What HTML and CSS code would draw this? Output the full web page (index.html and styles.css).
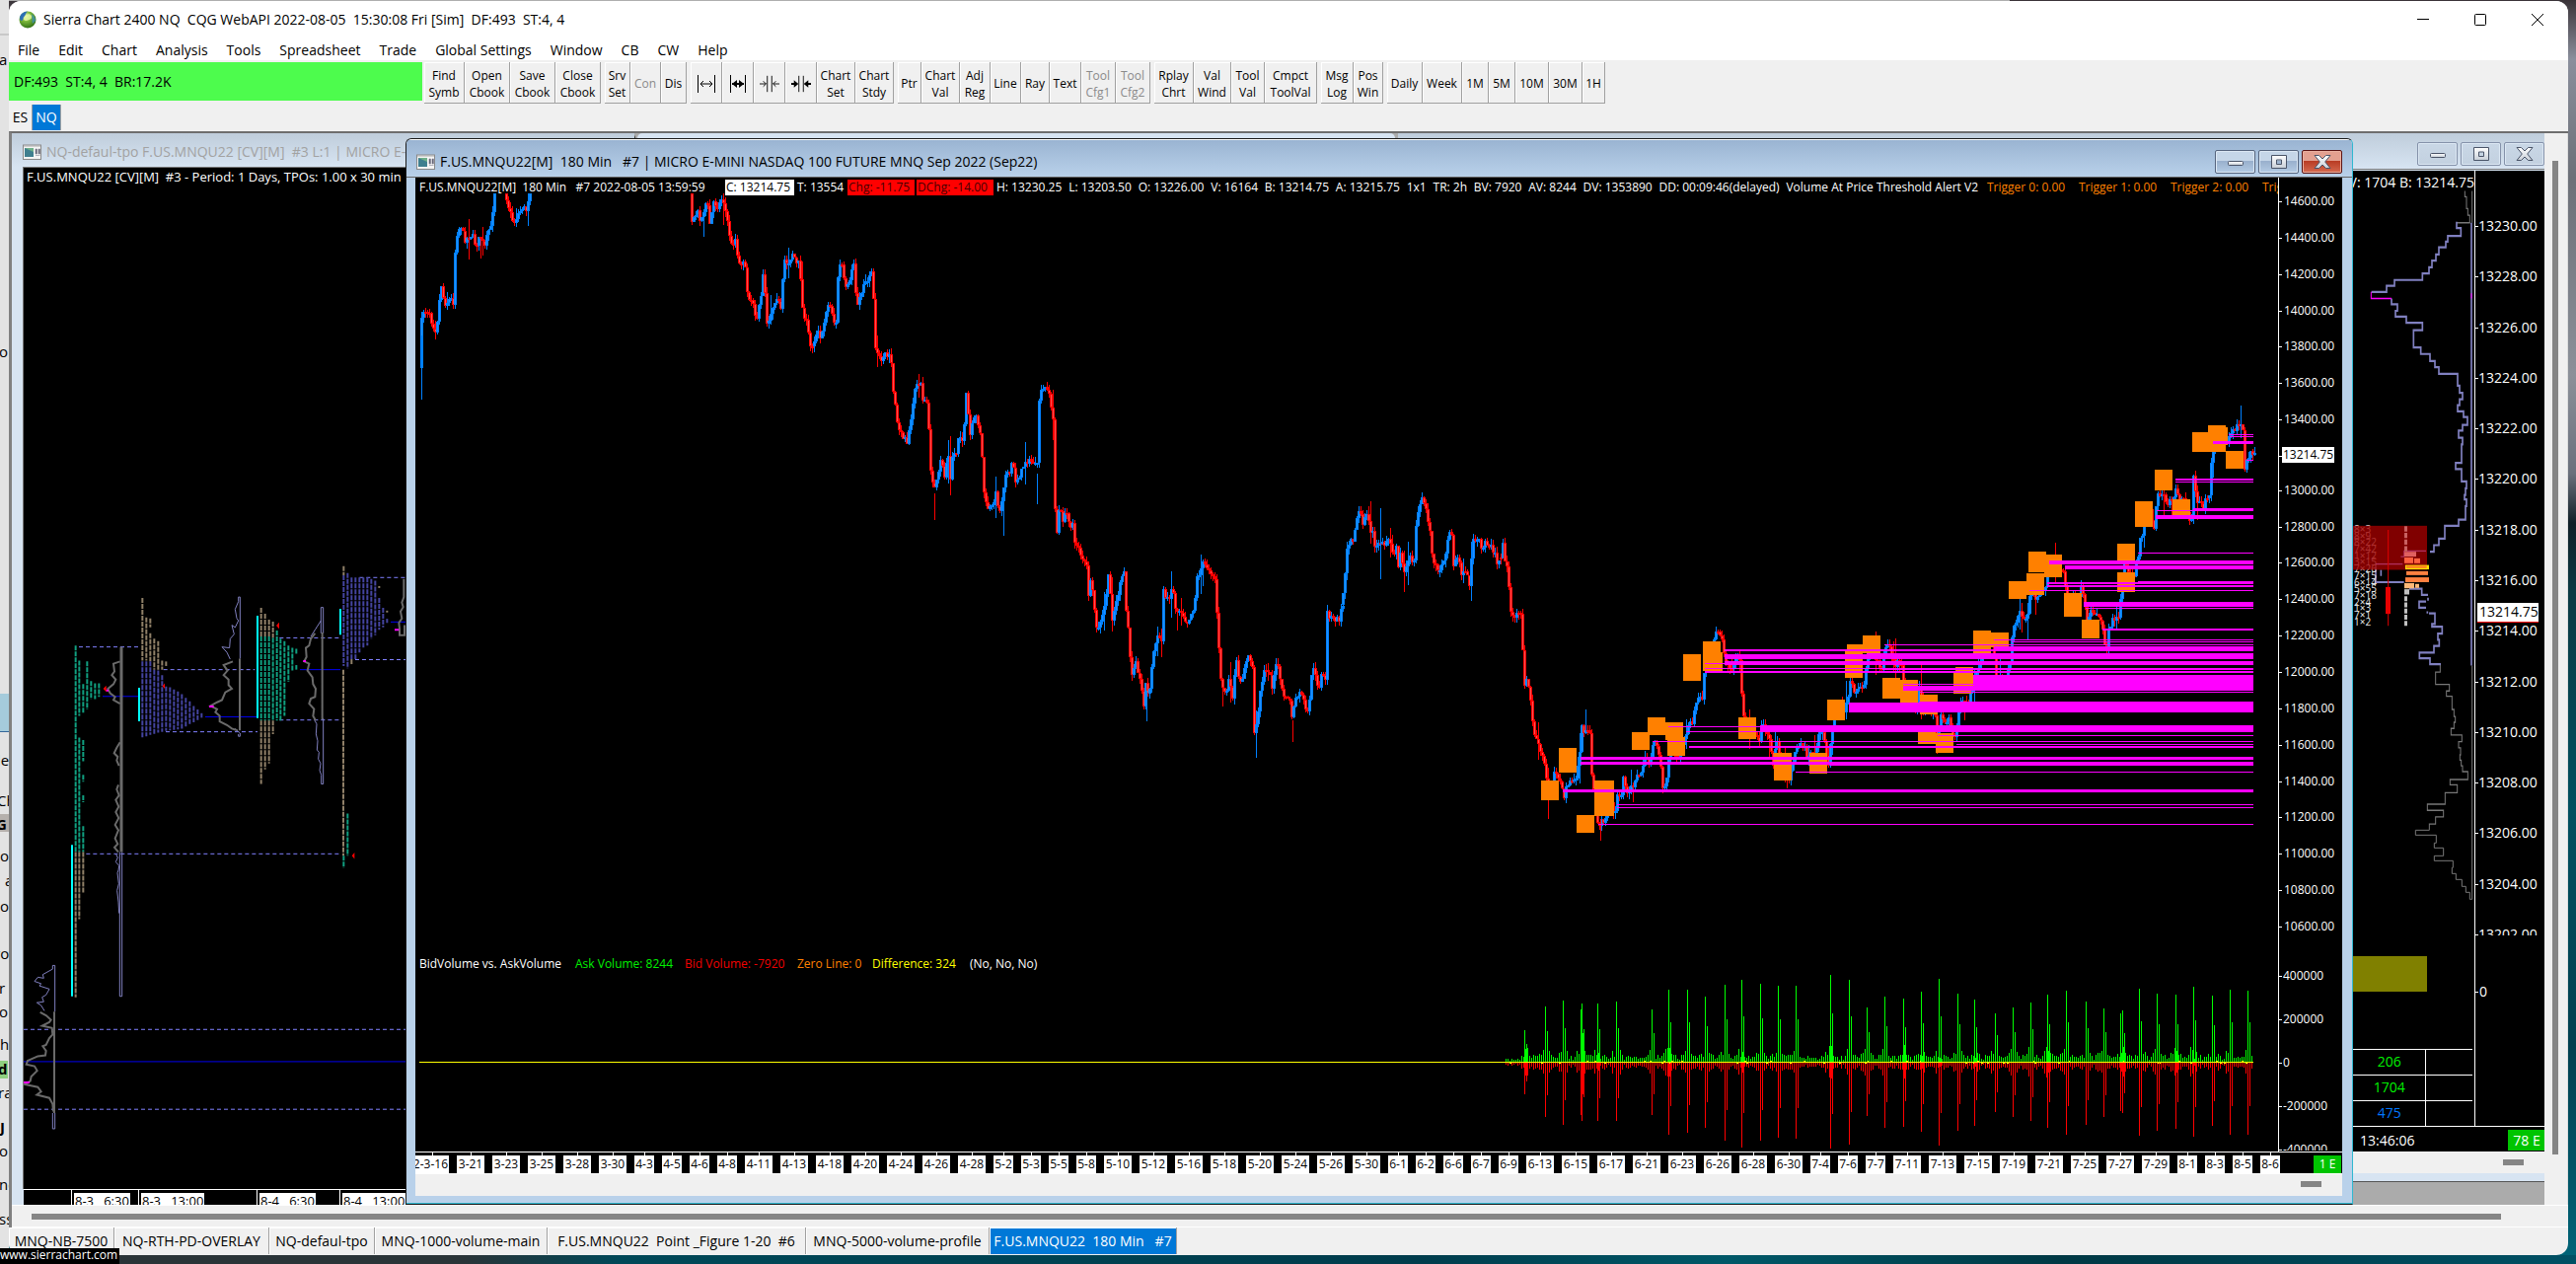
FILE: index.html
```html
<!DOCTYPE html>
<html lang="en">
<head>
<meta charset="utf-8">
<title>Sierra Chart 2400 NQ</title>
<link rel="stylesheet" href="styles.css">
</head>
<body>
<svg width="0" height="0" class="defs" aria-hidden="true">
  <defs>
    <linearGradient id="gl" x1="0" y1="0" x2="0" y2="1"><stop offset="0" stop-color="#fff"/><stop offset="1" stop-color="#c8cfd8"/></linearGradient>
    <radialGradient id="globe" cx=".4" cy=".3" r=".75"><stop offset="0" stop-color="#e8f8c0"/><stop offset=".4" stop-color="#7cb83a"/><stop offset="1" stop-color="#2a6a10"/></radialGradient>
    <symbol id="i-min" viewBox="0 0 20 16"><rect x="2.500" y="7.500" width="15" height="4" rx="1" fill="url(#gl)" stroke="#4a5468"/></symbol>
    <symbol id="i-max" viewBox="0 0 20 16"><path d="M2.500 1.500h15v13h-15zM7.500 6v4.500h5V6z" fill="url(#gl)" fill-rule="evenodd" stroke="#4a5468"/></symbol>
    <symbol id="i-close" viewBox="0 0 20 16"><path d="M2 1.500h4.500L10 5l3.500-3.500H18L12.700 8l5.300 6.500h-4.500L10 11l-3.500 3.500H2L7.300 8z" fill="url(#gl)" stroke="#4a5468"/></symbol>
    <symbol id="i-doc" viewBox="0 0 19 16"><rect x=".5" y="1" width="18" height="14.500" fill="#f4f4f4" stroke="#8a8a8a"/><rect x="2" y="4" width="9" height="9" fill="#3f7f8f"/><path d="M2 4h9v4z" fill="#6fb08a"/><path d="M13 5h1.500v5H13zM16 5h1.500v5H16zM13 11.500h4.500" fill="#556" stroke="#889" stroke-width=".6"/><path d="M1 2h17" stroke="#aaa"/></symbol>
  </defs>
</svg>

<div class="desktop">
  <svg class="behind" viewBox="0 0 9 1281" preserveAspectRatio="xMinYMin slice" aria-hidden="true">
    <rect width="9" height="1281" fill="#e3e3e3"/>
    <rect y="34" width="9" height="2" fill="#c8c8c8"/>
    <rect y="703" width="9" height="38" fill="#a5cbdb"/>
    <rect y="741" width="9" height="1" fill="#336699"/>
    <rect y="825" width="9" height="18" fill="#b5b0ac"/>
    <rect y="1075" width="8" height="18" fill="#8fd080"/>
    <text x="-1" y="66">a</text><text x="-1" y="362">o</text><text x="-3" y="776">le</text>
    <text x="-3" y="817">Ch</text><text x="-4" y="841" class="bold">G</text><text x="0" y="873">or</text>
    <text x="5" y="898">a</text><text x="0" y="924">oc</text><text x="-6" y="972">ro</text>
    <text x="-1" y="1007">r</text><text x="-1" y="1031">o</text><text x="0" y="1064">h</text>
    <text x="-2" y="1089" class="bold">d</text><text x="-2" y="1113">ra</text><text x="0" y="1148" class="bold">J</text>
    <text x="-1" y="1172">o</text><text x="-1" y="1206">ne</text><text x="-1" y="1241">ss</text>
  </svg>

  <main class="app">
    <header class="titlebar">
      <svg class="logo" viewBox="0 0 18 18"><circle cx="9" cy="9" r="8.500" fill="url(#globe)"/><path d="M1 8C1 3 5 1 9 .6 6 3 7 6 4 9c-1 2-2 1-3-1z" fill="#2c6fb5"/><path d="M5 6c3-3 6-4 8-1 1 3-2 4-5 5-3 0-4-2-3-4z" fill="#e6f7a0" opacity=".8"/><path d="M13 3c3 2 4 5 4 7l-3 3c-1-3 0-6-1-10z" fill="#3a8fc0" opacity=".7"/></svg>
      <h1>Sierra Chart 2400 NQ&nbsp; CQG WebAPI 2022-08-05&nbsp; 15:30:08 Fri [Sim]&nbsp; DF:493&nbsp; ST:4, 4</h1>
      <div class="sys">
        <button aria-label="Minimize"><svg viewBox="0 0 14 14"><path d="M1 6.500h12" /></svg></button>
        <button aria-label="Maximize"><svg viewBox="0 0 14 14"><rect x="1.500" y="1.500" width="11" height="11" rx="1"/></svg></button>
        <button aria-label="Close"><svg viewBox="0 0 14 14"><path d="M1 1l12 12M13 1L1 13"/></svg></button>
      </div>
    </header>
    <nav class="menu">
      <a href="#">File</a><a href="#">Edit</a><a href="#">Chart</a><a href="#">Analysis</a><a href="#">Tools</a><a href="#">Spreadsheet</a><a href="#">Trade</a><a href="#">Global Settings</a><a href="#">Window</a><a href="#">CB</a><a href="#">CW</a><a href="#">Help</a>
    </nav>
    <div class="toolbar">
      <div class="status">DF:493&nbsp; ST:4, 4&nbsp; BR:17.2K</div>
      <div class="group g-file"><button>Find<br>Symb</button><button>Open<br>Cbook</button><button>Save<br>Cbook</button><button>Close<br>Cbook</button></div>
      <div class="group g-conn"><button>Srv<br>Set</button><button disabled>Con</button><button>Dis</button></div>
      <div class="group g-bars">
        <button aria-label="Increase bar spacing"><svg viewBox="0 0 20 20"><path d="M1.500 1v18M18.500 1v18M4 10h12M7 7l-3 3 3 3M13 7l3 3-3 3"/></svg></button>
        <button aria-label="Increase bar width"><svg viewBox="0 0 20 20"><path d="M2.500 1v18M17.500 1v18"/><path d="M4 10h12" stroke-width="2"/><path d="M9 6v8l-5-4zM11 6v8l5-4z" fill="#000" stroke="none"/></svg></button>
        <button aria-label="Decrease bar spacing"><svg viewBox="0 0 22 20"><path d="M8.500 1v18M13.500 1v18M0 10h7M4 7l3 3-3 3M22 10h-7M18 7l-3 3 3 3"/></svg></button>
        <button aria-label="Decrease bar width"><svg viewBox="0 0 22 20"><path d="M8.500 1v18M13.500 1v18"/><path d="M0 10h4M18 10h4" stroke-width="2"/><path d="M3 6v8l5-4zM19 6v8l-5-4z" fill="#000" stroke="none"/></svg></button>
        <button>Chart<br>Set</button><button>Chart<br>Stdy</button>
      </div>
      <div class="group g-tools"><button>Ptr</button><button>Chart<br>Val</button><button>Adj<br>Reg</button><button>Line</button><button>Ray</button><button>Text</button><button disabled>Tool<br>Cfg1</button><button disabled>Tool<br>Cfg2</button></div>
      <div class="group g-wind"><button>Rplay<br>Chrt</button><button>Val<br>Wind</button><button>Tool<br>Val</button><button>Cmpct<br>ToolVal</button></div>
      <div class="group g-log"><button>Msg<br>Log</button><button>Pos<br>Win</button></div>
      <div class="group g-period"><button>Daily</button><button>Week</button><button>1M</button><button>5M</button><button>10M</button><button>30M</button><button>1H</button></div>
    </div>
    <nav class="books"><button>ES</button><button class="active">NQ</button></nav>

    <div class="mdi">
      <div class="canvas">
        <section class="win win-mid"></section>

        <section class="win win-left">
          <header class="caption"><svg class="doc"><use href="#i-doc"/></svg><h2>NQ-defaul-tpo F.US.MNQU22 [CV][M]&nbsp; #3 L:1 | MICRO E-MINI NASDAQ 100</h2></header>
          <div class="tpo">
            <svg id="tpo" viewBox="24 170 619 1035" preserveAspectRatio="none">
              <svg x="0" y="560" width="430" height="721" viewBox="0 0 1290 1568" preserveAspectRatio="none" class="profiles">
                <g class="dash"><path d="M240 208H423M262 664H1030M497 258H775M504 395H783M850 188H1035M850 369H1035M1093 55H1290M1080 236H1290M72 1227H1290"/><path d="M72 1051H1290"/></g>
                <g class="blue"><path d="M312 317H423M624 362H783M912 258H1035M1188 153H1290M72 1122H1290"/></g>
                <g class="cyan"><path d="M219 644V978M423 298V372M783 139V365M1035 124V181"/></g>
                <g id="tpo-columns"></g>
                <g class="lav"><path d="M167 1012V910H160V918L130 930 133 938 115 936 105 945 125 950 120 955 150 962 140 975 128 980 133 990 112 992 125 998 135 1010M160 1235V1270H167V1235"/><path d="M352 664 358 672 352 682 362 690 360 700 357 706 361 730 356 745 360 770 362 795M364 660V978H371V660"/><path d="M730 234V98H725V108L715 125 720 145 725 150 715 165 705 160 712 180 700 190 698 210 675 208 690 220 700 235M715 388 730 398V405H725V400"/><path d="M976 178V121H983V178M976 150 960 168 945 185M957 370 963 378 961 400 966 415 964 435 970 440 968 455 975 465 972 480 977 490V510H983V365"/></g>
                <g class="gray"><path d="M165 1012V1235M122 1013 140 1020 155 1030 150 1035 128 1043 158 1048 160 1062 150 1070 140 1085 130 1088 140 1098 138 1108 115 1110 84 1120 80 1128 105 1132 113 1142 95 1155 92 1165 76 1172 115 1178 125 1188 112 1195 150 1202 160 1215 162 1232"/><path d="M369 208V660" class="thick"/><path d="M365 240 345 245 348 262 340 270 352 280 345 290 328 300 335 310 350 318 345 325 365 333M365 418 355 430 347 442 358 450 355 458 362 470M360 512 355 522 362 535 352 545 361 560 352 572 361 585 350 600 360 612 350 630 358 642 348 650 360 660"/><path d="M729 234V392M708 240 680 248 692 260 680 270 695 280 695 292 705 300 685 308 675 325 660 330 640 338 660 345 655 352 668 360 668 372 690 380 705 388 722 392"/><path d="M980 176V368M958 178 945 190 940 205 930 210 932 230 925 240 940 245 935 260 950 275 952 290 960 300 958 318 945 322 940 333 955 345 952 360 960 370"/><path d="M1228 58V98L1222 110 1226 120 1218 130 1222 145 1213 155 1215 168 1215 182H1230V160"/></g>
                <g class="mag"><path d="M322 304H330M636 339H650M922 239H930M1200 170H1213M72 1168H90"/></g>
                <g class="redmark"><path d="M314 300l9-7v14zM494 294l7-6v12zM840 161l9-7v14zM1070 668l8-7v14z"/></g>
              </svg>
            </svg>
            <p class="readout">F.US.MNQU22 [CV][M]&nbsp; #3 - Period: 1 Days, TPOs: 1.00 x 30 min</p>
          </div>
          <ol class="sessions"><li><b>8-3&nbsp; &nbsp;6:30</b></li><li><b>8-3&nbsp; &nbsp;13:00</b></li><li><b>8-4&nbsp; &nbsp;6:30</b></li><li><b>8-4&nbsp; &nbsp;13:00</b></li></ol>
        </section>

        <section class="win win-right">
          <header class="caption"><h2></h2>
            <div class="ctl"><button aria-label="Minimize chart"><svg><use href="#i-min"/></svg></button><button aria-label="Maximize chart"><svg><use href="#i-max"/></svg></button><button aria-label="Close chart"><svg><use href="#i-close"/></svg></button></div>
          </header>
          <div class="client">
            <div class="plot">
              <svg viewBox="1425 173 1083 968" preserveAspectRatio="none">
                <svg x="2280" y="140" width="331" height="700" viewBox="0 0 993 1568" preserveAspectRatio="none" class="vol">
                  <path class="g1" d="M655 120V133H660V160H664V175H670V192H630M677 120V192M677 1197V1568M580 1194V1212H566V1240H608V1255H599V1267H616V1297H622V1313H626V1326H622V1340H613V1355H646V1370H636V1384H642V1400H640V1412H644V1425H648V1438H664V1456H610V1468H632V1486H595V1512H541V1526H590V1541H566V1557H547V1568"/>
                  <path class="p2" d="M675 192V1197M630 190V204H643V222H603V235H597V248H576V264H567V278H555V293H546V307H526V322H441V335H417V349H371M432 364V377H450V392H444V405H477V419H526V436H499V475H521V490H549V506H564V520H576V535H633V562H639V578H648V593H639V606H633V620H651V633H663V651H648V664H636V680H648V695H645V737H627V751H645V779H660V795H657V810H654V820H660V835H657V866H636V880H594V909H576V924H561V939H549"/>
                  <path class="p1" d="M384 967V1008H470M400 980V994M486 1023H524V1037H543M543 1043V1050M537 1066H516V1052H537M541 1074V1079M546 1079H564V1103H555V1109H586V1125H573V1139H577V1153H561V1168H517V1181H549V1194H582"/>
                  <path class="m1" d="M432 364H370V349M675 352V364"/>
                  <g id="prints"></g>
                  <rect x="315" y="880" width="225" height="100" fill="#a00000" opacity=".8"/>
                  <path d="M384 967H466M460 950H470V937H537" stroke="#b03060" fill="none" stroke-width="3"/>
                  <path d="M422 889V1107" stroke="#e00000" stroke-width="3"/><rect x="414" y="1019" width="15" height="61" fill="#e80000"/>
                  <rect x="471" y="939" width="36" height="11" fill="#e06060"/><rect x="471" y="952" width="27" height="13" fill="#ff6040"/><rect x="501" y="954" width="18" height="11" fill="#ff6040"/>
                  <rect x="474" y="969" width="72" height="10" fill="#ffe000"/><rect x="477" y="971" width="62" height="5" fill="#ff7a20"/>
                  <rect x="477" y="983" width="66" height="9" fill="#ff8040"/><rect x="474" y="997" width="72" height="11" fill="#ff8040"/>
                  <rect x="471" y="1010" width="30" height="12" fill="#ffb878"/><rect x="504" y="1012" width="12" height="9" fill="#ffb878"/>
                  <rect x="471" y="1024" width="15" height="12" fill="#c0c0c0"/>
                  <path d="M475.500 881V938" stroke="#c86060" stroke-width="9" stroke-dasharray="12 3"/>
                  <path d="M475.500 1040V1108" stroke="#c0c0c0" stroke-width="9" stroke-dasharray="11 3"/>
                </svg>
                <svg x="2280" y="840" width="331" height="301" viewBox="0 120 993 903" preserveAspectRatio="none" class="vol">
                  <path class="g1" d="M547 120V124H505V139H568V163H562V178H590V202H562V217H619V238H616V256H628V274H646V295H658V313H670V334H677V120"/>
                  <rect x="300" y="507" width="240" height="108" fill="#808000"/>
                </svg>
              </svg>
              <p class="readout">V: 1704 B: 13214.75</p>
              <table class="figures"><tbody><tr><td class="up">206</td><td></td></tr><tr><td class="up">1704</td><td></td></tr><tr><td class="info">475</td><td></td></tr></tbody></table>
            </div>
            <div class="scale">
              <ol class="prices" id="fine-prices"></ol>
              <span class="last">13214.75</span>
              <span class="zero">0</span>
            </div>
            <div class="times"><time>13:46:06</time><b class="tag">78 E</b></div>
            <div class="hscroll"><i></i></div>
          </div>
        </section>

        <section class="win win-active">
          <header class="caption"><svg class="doc"><use href="#i-doc"/></svg><h2>F.US.MNQU22[M]&nbsp; 180 Min&nbsp; &nbsp;#7 | MICRO E-MINI NASDAQ 100 FUTURE MNQ Sep 2022 (Sep22)</h2>
            <div class="ctl"><button aria-label="Minimize chart"><svg><use href="#i-min"/></svg></button><button aria-label="Maximize chart"><svg><use href="#i-max"/></svg></button><button class="close" aria-label="Close chart"><svg><use href="#i-close"/></svg></button></div>
          </header>
          <div class="client">
            <div class="plot">
              <svg viewBox="421 180 1888 987" preserveAspectRatio="none" shape-rendering="crispEdges">
                <g id="volume"></g><path d="M425 1076.500H2284" stroke="#ff0"/><g id="candles"></g><g id="alerts"></g><g id="levels"></g>
              </svg>
              <div class="readout quote"><span>F.US.MNQU22[M]&nbsp; 180 Min&nbsp; &nbsp;#7 2022-08-05 13:59:59</span><span class="close-px">C: 13214.75</span><span>T: 13554</span><span class="chg">Chg: -11.75</span><span class="chg">DChg: -14.00</span><span class="fields"><span>H: 13230.25</span><span>L: 13203.50</span><span>O: 13226.00</span><span>V: 16164</span><span>B: 13214.75</span><span>A: 13215.75</span><span>1x1</span><span>TR: 2h</span><span>BV: 7920</span><span>AV: 8244</span><span>DV: 1353890</span><span>DD: 00:09:46(delayed)</span><span>Volume At Price Threshold Alert V2</span></span><span class="or">Trigger 0: 0.00</span><span class="or">Trigger 1: 0.00</span><span class="or">Trigger 2: 0.00</span><span class="or">Trigger 3: 0.00</span></div>
              <div class="readout study"><span>BidVolume vs. AskVolume</span><span class="lime">Ask Volume: 8244</span><span class="red">Bid Volume: -7920</span><span class="or">Zero Line: 0</span><span class="yel">Difference: 324</span><span>(No, No, No)</span></div>
            </div>
            <div class="scale"><ol class="prices" id="prices"></ol><ol class="volumes"><li>400000</li><li>200000</li><li>0</li><li>-200000</li><li>-400000</li></ol></div>
            <div class="times"><ol id="dates"></ol><b class="tag">1 E</b></div>
            <div class="hscroll"><i></i></div>
          </div>
        </section>
      </div>
      <div class="track-v"><i></i></div>
      <div class="track-h"><i></i></div>
    </div>

    <nav class="charts"><button>MNQ-NB-7500</button><button>NQ-RTH-PD-OVERLAY</button><button>NQ-defaul-tpo</button><button>MNQ-1000-volume-main</button><button>F.US.MNQU22&nbsp; Point _Figure 1-20&nbsp; #6</button><button>MNQ-5000-volume-profile</button><button class="active">F.US.MNQU22&nbsp; 180 Min&nbsp; &nbsp;#7</button></nav>
  </main>
  <a class="hint" href="#">www.sierrachart.com</a>
</div>
<script src="charts.js"></script>
</body>
</html>
```

FILE: styles.css
```css
* { box-sizing: border-box; }
body { margin: 0; font: 14px/18px "Open Sans", "Noto Sans", sans-serif; color: #000; }
h1, h2, p, ol { margin: 0; padding: 0; font-size: inherit; font-weight: inherit; list-style: none; }
button { font: inherit; color: inherit; border: 0; padding: 0; margin: 0; background: none; white-space: nowrap; }
a { color: inherit; text-decoration: none; }
svg { display: block; }
.defs { position: absolute; }

.desktop {
  position: relative; height: 100vh; overflow: hidden; display: flex;
  padding: 1px 8px 9px 9px;
  background:
    linear-gradient(90deg, #aeaeae 78%, #3a3338 78%) top / 100% 1px no-repeat,
    linear-gradient(90deg, #2a3438 0, #2a3438 18%, #004858 24%, #003c4c 55%, #005868 67%, #003844 80%, #005064 100%) bottom / 100% 9px no-repeat,
    linear-gradient(180deg, #3a3338 0, #8a8f9c 60px, #6c7078 180px, #8b9099 380px, #6a707c 480px, #102028 530px, #0a3a44 600px, #005060 820px, #004050 1060px, #006478 1281px);
}
.behind { position: absolute; left: 0; top: 0; width: 9px; height: 100%; font-size: 15px; }
.behind .bold { font-weight: 700; }
.hint { position: absolute; left: 0; bottom: 0; width: 121px; height: 16px; background: #000; color: #fff; font-size: 12px; line-height: 14px; overflow: hidden; }

.app { position: relative; flex: 1; min-width: 0; display: flex; flex-direction: column; background: #f0f0f0; border-radius: 12px; overflow: hidden; }
.titlebar { display: flex; align-items: center; height: 34px; padding: 4px 24px 0 10px; background: #fff; }
.logo { width: 18px; height: 18px; margin-right: 7px; }
.titlebar h1 { flex: 1; }
.sys { display: flex; gap: 44px; }
.sys svg { width: 14px; height: 14px; fill: none; stroke: #000; }
.menu { display: flex; gap: 19px; height: 26px; padding: 7px 0 0 9px; background: #fff; white-space: nowrap; }
.toolbar { display: flex; height: 45px; padding-top: 2px; gap: 4px; line-height: 17px; }
.status { width: 419px; height: 39px; margin-right: -2px; padding-left: 5px; background: #4dfc4d; line-height: 39px; }
.group { display: grid; height: 42px; }
.group button { display: flex; align-items: center; justify-content: center; text-align: center; overflow: hidden; padding-top: 2px; border: solid #a0a0a0; border-width: 0 1px 1px 0; box-shadow: inset 1px 1px #fff; font-size: 12px; }
.group button:disabled { color: #8a8a8a; }
.group svg { width: 20px; height: 20px; fill: none; stroke: #000; }
.g-file { grid-template-columns: 41px 46px 46px 46px; }
.g-conn { grid-template-columns: 26px 31px 26px; }
.g-bars { grid-template-columns: 32px 32px 32px 32px 39px 39px; }
.g-tools { grid-template-columns: 24px 39px 31px 31px 29px 32px 35px 35px; }
.g-wind { grid-template-columns: 40px 38px 34px 53px; }
.g-log { grid-template-columns: 33px 30px; }
.g-period { grid-template-columns: 36px 40px 27px 27px 34px 34px 23px; }
.books { display: flex; height: 27px; }
.books button { width: 24px; height: 26px; border-right: 1px solid #a0a0a0; }
.books .active { width: 29px; background: #0078d7; color: #fff; }

.mdi { flex: 1; min-height: 0; display: grid; grid-template: 1fr 23px / 1fr 24px; border-top: 2px solid #6e6e6e; border-left: 3px solid #808080; }
.canvas { position: relative; overflow: hidden; background: #ababab; }
.track-v { padding: 28px 8px 51px 8px; border-right: 1px solid #ddd; }
.track-h { grid-column: 1 / 3; padding: 8px 68px 0 20px; border-top: 1px solid #fff; border-bottom: 1px solid #fff; }
.track-v i { display: block; height: 100%; width: 6px; background: #858585; }
.track-h i { display: block; height: 6px; background: #858585; }

.win { position: absolute; display: flex; flex-direction: column; background: #d7e4f2; }
.caption { display: flex; flex: none; align-items: center; white-space: nowrap; background: linear-gradient(#bfcddb, #d7e4f2); }
.caption h2 { flex: 1; min-width: 0; overflow: hidden; }
.doc { width: 19px; height: 16px; margin-right: 5px; flex: none; }
.ctl { display: flex; gap: 3px; }
.ctl button { display: grid; place-items: center; width: 41px; height: 24px; border: 1px solid #8592aa; border-radius: 2px; background: linear-gradient(#c9d7e6, #c3d1e0); box-shadow: inset 0 0 0 1px #dce8f4; }
.ctl svg { width: 20px; height: 16px; }
.win-active .ctl button { border-color: #56657e; background: linear-gradient(#c5d6e8 45%, #98afcc 45%, #b4cbe4); }
.win-active .ctl .close { border-color: #5a1414; background: linear-gradient(#e3a090 45%, #b83a22 45%, #d46a50); box-shadow: inset 0 0 0 1px #eab0a0; }

.win-mid { left: 634px; width: 768px; top: 0; bottom: 23px; border-radius: 5px 5px 0 0; }
.win-left { left: 0; width: 632px; top: 0; bottom: -14px; padding-left: 11px; border-radius: 0 5px 0 0; border-right: 1px solid #333; }
.win-left .caption { height: 34px; margin-left: -11px; padding: 3px 0 0 11px; color: #a2a2a2; }
.tpo { position: relative; flex: 1; min-height: 0; background: #000; border: solid #777; border-width: 1px 0 0 1px; }
.tpo > svg { position: absolute; inset: 0; width: 100%; height: 100%; }
.readout { position: absolute; color: #fff; white-space: nowrap; font-size: 12px; line-height: 16px; }
.tpo .readout { left: 3px; top: 1px; font-size: 13px; }
.profiles path { vector-effect: non-scaling-stroke; fill: none; }
.dash path { stroke: #8080ff; stroke-dasharray: 4 3; }
.blue path { stroke: #0000f0; }
.cyan path { stroke: #0ff; stroke-width: 2; }
.lav path { stroke: #8080c0; }
.gray path { stroke: #6a6a6a; stroke-width: 2; }
.gray .thick { stroke-width: 3; }
.mag path { stroke: #f0f; stroke-width: 2; }
.profiles .redmark path { fill: red; }
.t-teal { stroke: #10a080; } .t-tan { stroke: #908068; } .t-blue { stroke: #4444a0; }
.sessions { display: grid; grid-template-columns: 68px 120px 84px 120px; height: 30px; padding-left: 48px; margin-left: 1px; background: #000; border-top: 1px solid #fff; }
.sessions li { padding: 2px 0 0 2px; border-left: 1px solid #fff; white-space: nowrap; }
.sessions b { display: inline-block; height: 20px; padding: 0 1px; background: #fff; font-weight: 400; font-size: 13px; line-height: 16px; }

.client { flex: 1; min-height: 0; display: grid; background: #000; }
.plot { position: relative; min-height: 0; min-width: 0; overflow: hidden; }
.plot > svg { position: absolute; inset: 0; width: 100%; height: 100%; }
.scale { position: relative; color: #fff; border-left: 1px solid #fff; overflow: hidden; min-height: 0; }
.prices, .volumes { position: absolute; left: 0; display: flex; flex-direction: column; justify-content: space-between; }
.scale li::before { content: ""; position: absolute; left: 0; width: 3px; margin-top: 9px; height: 1px; background: #fff; }
.times, .hscroll { grid-column: 1 / 3; }
.times { display: flex; justify-content: space-between; background: #000; border-top: 1px solid #fff; overflow: hidden; }
.tag { font-weight: 400; background: #00c400; color: #fff; text-align: center; }
.hscroll { background: #f0f0f0; border-top: 1px solid #fff; padding-top: 7px; }
.hscroll i { display: block; width: 21px; height: 6px; margin: 0 21px 0 auto; background: #858585; }

.win-right { left: 1405px; right: 0; top: 0; bottom: 23px; padding: 0 0 8px 8px; border-bottom: 1px solid #555; border-radius: 5px 0 0 0; }
.win-right .caption { height: 37px; border-bottom: 1px solid #777; margin-left: -8px; padding-top: 6px; padding-bottom: 1px; }
.win-right .client { grid-template: 1fr 26px 22px / 1fr 71px; margin-top: 1px; }
.win-right .readout { right: 0; top: 3px; font-size: 14px; line-height: 18px; }
.win-right .prices { left: 3px; top: 46px; height: 738px; line-height: 20px; }
.win-right .prices li::before { left: -3px; margin-top: 10px; }
.win-right .scale { overflow: visible; }
.win-right .prices li:last-child { height: 20px; clip-path: inset(0 0 9px -4px); }
.win-right .last { position: absolute; left: 2px; top: 438px; width: 62px; height: 20px; padding-left: 2px; background: #fff; color: #000; border-bottom: 1px solid red; line-height: 18px; }
.zero { position: absolute; left: 4px; top: 823px; }
.zero::before { content: ""; position: absolute; left: -4px; top: 9px; width: 3px; height: 1px; background: #fff; }
.win-right .times { justify-content: flex-end; }
.win-right time { margin: 5px 96px 0 0; width: 54px; color: #fff; }
.win-right .tag { width: 37px; height: 21px; margin-top: 3px; padding-left: 1px; line-height: 21px; }
.vol path { fill: none; }
.g1 { stroke: #787878; stroke-width: 3; } .p1, .p2 { stroke: #8080c0; stroke-width: 5; } .m1 { stroke: #f0f; stroke-width: 3; }
.prints text { fill: #e8e8e8; }
.figures { position: absolute; right: 2px; bottom: 0; width: 240px; border-collapse: collapse; text-align: center; }
.figures td { height: 26px; padding: 0; border: 1px solid #fff; border-bottom: 0; }
.figures td + td { width: 48px; border-right: 0; }
.figures .up, .figures .info { padding-left: 119px; }
.figures .up { color: #00f000; } .figures .info { color: #0078ff; }

.win-active { left: 399px; right: 194px; top: 5px; bottom: 0; padding: 0 10px 8px 9px; border: 1px solid #1a1a1a; border-right-color: #30b8d0; border-radius: 6px 6px 0 0; background: #b9d1ea; box-shadow: inset 0 -1px #30b8d0, inset 0 1px #fff; overflow: hidden; }
.win-active .caption { height: 38px; margin: 1px -10px 0 -9px; padding: 9px 10px 3px 9px; background: linear-gradient(#9ab4d2, #b9d1ea); border-bottom: 1px solid #666; }
.win-active .doc { margin-left: 1px; }
.win-active .client { grid-template: 1fr 22px 23px / 1fr 65px; }
.quote { display: grid; left: 4px; top: 2px; right: 0; grid-template-columns: 311px 72px 52px 70px 80px 1004px 93px 93px 93px 93px; }
.quote > span { padding: 0 1px; margin-left: -1px; }
.quote .close-px { margin-right: 3px; background: #fff; color: #000; }
.quote .chg { margin-right: 3px; background: red; color: #400; }
.fields { display: flex; justify-content: space-between; margin-right: 8px; }
.or { color: #ff8000; } .lime { color: #00f000; } .red { color: #f00000; } .yel { color: #ff0; }
.study { display: grid; grid-template-columns: 158px 111px 114px 76px 99px 90px; left: 4px; top: 789px; }
.win-active .prices { left: 1px; top: 15px; height: 753px; }
.win-active .prices li { padding-left: 4px; }
.win-active .scale li::before { left: -1px; }
.win-active .prices .last { position: relative; margin-left: 2px; padding: 0 1px; line-height: 16px; background: #fff; color: #000; }
.win-active .prices .last::before { left: -3px; }
.volumes { left: 1px; top: 800px; height: 194px; }
.volumes li { padding-left: 3px; }
.win-active .volumes { clip-path: inset(0 0 8px -4px); }
.win-active ol { font-size: 12px; }
#dates { display: flex; gap: 8px; padding-top: 3px; }
#dates li { position: relative; display: flex; flex: none; justify-content: center; width: 28px; height: 18px; background: #fff; white-space: nowrap; }
#dates li.s { width: 20px; }
#dates li:first-child { width: 34px; justify-content: flex-end; padding-right: 1px; }
#dates li::before { content: ""; position: absolute; left: 50%; top: -3px; height: 3px; width: 1px; background: #fff; }
.win-active .tag { width: 28px; height: 18px; margin: 3px 1px 0 0; font-size: 12px; }

.charts { display: grid; grid-template-columns: 107px 157px 107px 175px 262px 186px 190px; height: 28px; line-height: 26px; }
.charts button { height: 27px; border-right: 1px solid #a0a0a0; box-shadow: inset 1px 1px #fff; text-align: center; }
.charts .active { background: #0078d7; color: #fff; }
```

FILE: charts.js
```js
const NS = 'http://www.w3.org/2000/svg';
const el = (parent, name, attrs, text) => {
  const n = document.createElementNS(NS, name);
  for (const k in attrs) n.setAttribute(k, attrs[k]);
  if (text) n.textContent = text;
  parent.appendChild(n);
  return n;
};
const $ = id => document.getElementById(id);
let seed = 7;
const rnd = () => (seed = (seed * 16807) % 2147483647) / 2147483647;

// Each run of prices has its own origin and scale.
const runs = [
  { x0: 400, y0: 180, sx: 1.568, sy: 2.529, p: '40,487 42,395 46,340 56,340 60,370 67,395 75,270 80,325 90,310 95,320 97,195 99,145 106,120 112,160 124,145 130,175 137,150 144,180 150,135 155,130 158,50 160,20' },
  { x0: 400, y0: 180, sx: 1.568, sy: 2.529, p: '176,30 180,60 184,90 190,117 198,90 205,75 210,85 216,30' },
  { x0: 400, y0: 180, sx: 1.568, sy: 2.529, p: '470,30 474,120 482,85 488,110 495,65 500,80 503,145 506,60 515,75 522,50 528,95 536,175 543,155 548,225 556,205 562,300 571,320 576,365 583,315 587,230 593,375 600,340 608,300 615,345 620,210 626,220 634,190 640,225 645,215 648,330 656,375 662,437 668,415 674,385 679,418 688,325 694,330 700,375 704,375 706,225 712,225 717,290 724,275 730,205 735,320 740,315 746,270 753,260 760,230 763,345 765,430 775,480 781,450 785,465 789,445 793,545 799,620 807,668 812,655 816,680 822,620 827,540 838,522 841,575 847,575 851,685 853,745 859,800 865,765 870,715 876,780 880,685 884,785 888,705 894,705 898,648 905,685 909,550 916,668 920,625 926,610 932,655 935,730 938,815 942,848 950,845 956,808 963,858 968,800 973,745 979,770 982,725 988,778 997,755 1003,725 1018,730 1022,760 1025,570 1030,545 1040,535 1044,590 1048,625 1050,830 1054,915 1057,850 1063,875 1070,860 1076,895 1079,885 1083,965 1086,930 1092,970 1101,1000 1104,1070 1107,1040 1112,1080 1116,1160 1124,1140 1130,1090 1136,1015 1141,1130 1146,1100 1154,1045 1161,1005 1164,1135 1167,1155 1170,1245 1173,1270 1179,1230 1186,1295 1192,1350 1195,1295 1199,1335 1203,1275 1208,1205 1215,1175 1220,1190 1223,1055 1230,1085 1237,1045 1243,1115 1250,1105 1260,1140 1266,1120 1272,1095 1276,1025 1286,990 1297,1005 1305,1030 1311,1215 1314,1290 1322,1325 1327,1285 1332,1340 1339,1240 1344,1310 1352,1250 1358,1230 1364,1245 1367,1420 1372,1400 1375,1325 1382,1270 1390,1260 1395,1305 1404,1235 1410,1310 1418,1340 1422,1325 1427,1380 1435,1330 1443,1320 1451,1385 1456,1330 1459,1250 1470,1310 1475,1265 1480,1295 1483,1115 1490,1130 1502,1135 1506,1100' },
  { x0: 1360, y0: 480, sx: 3, sy: 3, p: '1,400 4,365 10,350 13,265 17,225 25,205 30,190 37,200 42,175 47,138 53,115 60,125 65,170 72,125 82,128 88,185 97,165 102,225 110,220 118,215 125,200 132,225 140,195 148,200 155,230 162,240 166,180 172,320 178,235 184,250 190,295 198,290 205,265 213,230 220,305 226,165 232,135 240,95 245,80 255,92 262,130 268,160 274,215 281,275 290,285 307,285 312,255 320,230 325,190 333,180 337,175 342,280 352,255 360,265 366,300 372,305 378,290 383,315 390,335 395,265 402,205 410,200 418,200 425,232 433,230 437,205 445,215 455,210 460,240 470,240 474,268 480,265' },
  { x0: 1500, y0: 400, sx: 1.889, sy: 3, p: '38,495 42,495 46,445 50,530 54,515 58,620 62,680 70,670 82,670 83,780 88,905 92,855 96,910 99,940 103,1015 110,1050 115,1080 122,1105 127,1140 131,1230 139,1200 145,1130 152,1165 158,1200 162,1225 172,1165 177,1185 185,1165 190,1120 193,1080 197,990 201,1045 206,1000 212,1040 216,1190 222,1225 225,1290 230,1305 240,1290 247,1260 252,1235 259,1290 264,1210 270,1230 276,1165 282,1225 288,1190 294,1190 300,1160 307,1165 314,1120 320,1105 327,1125 331,1055 342,1080 348,1130 352,1200 358,1180 363,1100 368,1040 375,1110 382,1100 390,1050 398,1040 402,1000 409,1000 416,925 427,930 430,860 436,800 445,770 452,730 457,715 465,740 470,800 480,830 490,820 494,790 500,800 503,945 508,1000 520,1010 530,1040 536,1055 540,1000 548,1020 556,1060 563,1120 570,1040 577,1110 585,1140 592,1170 600,1130 606,1080 613,1055 622,1065 628,1110 635,1080 643,1090 650,1030 657,1025 663,1070 668,1140 674,1040 680,960 690,940 700,960 706,930 711,870 718,915 726,885 738,885 742,800 752,760 760,800 770,830 778,760 785,755 790,800 798,820 808,810 814,880 825,900 835,960 843,880 850,970 857,940 865,980 872,960 877,1090 882,960 890,1000 900,985 905,1040 912,1030 918,950 928,920 937,940 943,900 950,850 957,830 965,790 975,740 985,780 990,880 998,860 1005,880 1012,850 1018,790 1022,700 1030,680 1037,655 1045,695 1052,660 1055,590 1065,615 1075,600 1085,580 1090,520 1100,500 1108,540 1117,520 1123,600 1130,660 1138,600 1145,640 1153,580 1160,640 1163,690 1170,650 1178,680 1185,665 1192,700 1200,790 1206,710 1213,680 1225,680 1230,590 1235,490 1243,540 1255,545 1262,480 1266,430 1272,430 1275,350 1285,350 1292,400 1299,300 1310,310 1318,335 1325,315 1330,320 1334,270 1338,320 1350,320 1358,375 1364,370 1367,250 1375,320 1385,345 1392,310 1400,290 1402,180 1415,110 1425,150 1435,130 1440,105 1447,110 1452,85 1462,100 1465,225 1472,200 1475,165 1481,175' }
];
const candles = $('candles');
for (const r of runs) {
  const pts = r.p.split(' ').map(s => s.split(',').map(Number)).map(([x, y]) => [r.x0 + x / r.sx, r.y0 + y / r.sy]);
  const at = x => {
    let i = 0;
    while (i < pts.length - 2 && pts[i + 1][0] < x) i++;
    const [a, b] = [pts[i], pts[i + 1]];
    const t = Math.max(0, Math.min(1, (x - a[0]) / (b[0] - a[0])));
    return a[1] + t * (b[1] - a[1]);
  };
  let prev = at(pts[0][0]);
  for (let x = Math.round(pts[0][0] / 2) * 2; x < pts[pts.length - 1][0]; x += 2) {
    const y = at(x + 2) + (rnd() - 0.5) * 7;
    const top = Math.round(Math.min(prev, y)), bot = Math.max(top + 2, Math.round(Math.max(prev, y)));
    const long = rnd() > 0.88 ? 16 : 0;
    const hi = Math.max(196, Math.round(top - rnd() * (6 + long))), lo = Math.round(bot + rnd() * (6 + long));
    const up = y < prev;
    prev = y;
    if (lo < 197) continue;
    const t = Math.max(196, top);
    const c = up ? '#0080ff' : '#ff0000';
    el(candles, 'rect', { x: x + 1, y: hi, width: 1, height: lo - hi, fill: c });
    if (bot > t) el(candles, 'rect', { x, y: t, width: 3, height: bot - t, fill: c });
    if (bot - t > 3) el(candles, 'rect', { x: x + 1, y: t + 1, width: 1, height: bot - t - 2, fill: up ? '#2090ff' : '#ff5050' });
  }
}
// The deepest wicks: x, from, to, up or down.
[[427,340,405,1],[1273,720,768,1],[1162,700,731,1],[1310,730,752,0],[947,500,527,0],[1017,500,543,1],[1399,515,587,1],[1622,830,852,0],[1051,480,511,1]].forEach(([x, a, b, up]) =>
  el(candles, 'rect', { x, y: a, width: 1, height: b - a, fill: up ? '#0080ff' : '#ff0000' }));

const rects = (id, data, w, fill) => data.split(' ').forEach(s => {
  const a = s.split(',').map(Number);
  const x = Math.round(1500 + a[0] / 1.889), y = Math.round(400 + a[1] / 3);
  const width = w ? Math.round(a[2] / 1.889) : 2284 - x;
  el($(id), 'rect', { x, y, width, height: Math.round((w ? a[3] : a[2]) / 3), fill });
});
rects('alerts', '117,1173,34,60 151,1074,34,75 185,1278,34,54 223,1173,34,108 219,1173,34,108 291,1026,34,54 321,981,34,54 355,996,34,54 359,1040,34,58 389,789,34,81 427,750,34,90 431,783,34,57 495,981,34,66 563,1089,34,84 631,1089,34,63 665,927,34,63 699,780,34,81 703,759,30,60 733,732,34,54 771,861,34,63 805,867,34,69 843,912,34,60 839,1020,34,42 873,1030,34,59 907,840,34,69 911,828,34,57 945,717,34,70 979,723,34,45 1013,567,34,54 1047,543,34,66 1050,477,34,63 1081,486,34,69 1118,603,34,72 1152,684,34,57 1220,453,34,55 1220,540,34,60 1254,324,34,78 1292,228,34,63 1326,318,34,48 1364,114,34,60 1394,93,34,81 1398,99,34,54 1428,171,34,54', true, '#ff8000');
rects('levels', '1434,120,3 1436,126,3 1404,141,9 1467,198,3 1332,255,6 1332,264,3 1366,345,9 1295,351,3 1294,366,12 1260,480,3 1090,504,12 1120,519,12 1260,567,6 1086,570,6 1086,579,6 1052,594,3 1157,630,15 1160,648,3 1192,711,6 984,744,3 1018,750,3 774,759,3 984,765,9 468,774,6 740,786,9 468,789,15 468,810,12 430,816,3 430,831,3 770,831,6 430,840,6 945,852,48 810,879,3 810,885,15 843,903,3 840,933,6 706,936,30 361,1008,3 536,1005,21 395,1023,3 877,1035,3 331,1053,3 912,1062,3 400,1068,6 192,1101,9 192,1116,9 670,1119,9 604,1146,3 158,1200,9 262,1245,3 262,1254,3 226,1305,3', false, '#ff00ff');

// Ask and bid volume, a bar each two pixels, with one opening spike a session.
const spikes = '228,282,476 260,210,545 288,192,567 316,219,537 319,201,555 344,201,557 373,195,557 429,219,537 457,159,597 486,159,593 514,180,578 545,144,617 573,129,636 602,141,617 630,147,608 658,147,611 714,114,641 743,129,629 771,213,540 799,180,578 830,186,573 858,165,590 886,126,632 915,171,587 943,189,570 975,231,528 1003,213,543 1031,198,555 1059,174,578 1088,162,597 1119,195,567 1147,216,543 1175,231,525 1178,222,533 1204,156,602 1232,171,587 1263,174,581 1291,150,605 1320,177,572 1348,159,597 1376,162,597'
  .split(' ').map(s => s.split(',').map(Number)).map(a => [Math.round(1400 + a[0] / 1.568), (379 - a[1]) / 3, (a[2] - 379) / 3]);
const vol = $('volume');
const bar = (x, up, down) => {
  el(vol, 'rect', { x, y: Math.round(1076 - up), width: 1, height: Math.round(up), fill: '#00ff00' });
  el(vol, 'rect', { x, y: 1077, width: 1, height: Math.round(down), fill: '#ff0000' });
};
for (let x = 1526; x < 2284; x += 2) {
  const near = Math.min(...spikes.map(s => Math.abs(s[0] - x)));
  const h = x < 1542 ? 1 + rnd() * 3 : 2 + rnd() * 5 + Math.max(0, 8 - near) * rnd() * 1.6;
  bar(x, h, h * 0.95);
  if (rnd() > 0.8) el(vol, 'rect', { x, y: 1075 + Math.round(rnd() * 2), width: 2, height: 1, fill: '#ff0' });
}
spikes.forEach(([x, u, d]) => { bar(x, u, d); bar(x + 2, u * 0.55, d * 0.6); });

// Letter columns of the time-price profiles: x, from, to, tone.
const cols = $('tpo-columns');
const tone = { g: 't-teal', t: 't-tan', b: 't-blue' };
const col = (x, a, b, k) => el(cols, 'path', { d: `M${x} ${a}V${b}`, class: tone[k], 'stroke-width': 2, 'stroke-dasharray': '5 1' });
[[230,205,660,'g'],[230,660,980,'t'],[241,238,360,'g'],[241,408,660,'g'],[241,660,808,'t'],[253,290,355,'g'],[253,413,460,'g'],[253,490,505,'g'],[253,535,550,'g'],[253,603,660,'g'],[253,660,750,'t'],[265,240,345,'g'],[277,283,323,'g'],[289,288,323,'g'],[301,288,318,'g'],
 [433,100,238,'t'],[445,143,238,'t'],[457,145,165,'t'],[457,178,240,'t'],[469,190,258,'t'],[481,195,258,'t'],[493,238,258,'t'],[505,240,250,'t'],
 [794,122,185,'t'],[794,185,370,'g'],[794,370,510,'t'],[806,135,185,'t'],[806,185,370,'g'],[806,370,478,'t'],[818,148,185,'t'],[818,185,370,'g'],[818,370,465,'t'],[830,152,188,'t'],[830,188,370,'g'],[830,370,400,'t'],[842,172,370,'g'],[853,190,370,'g'],[865,195,360,'g'],[877,205,285,'g'],[889,210,260,'g'],[901,212,225,'g'],[901,248,258,'g'],
 [1045,30,50,'t'],[1045,50,250,'b'],[1044,258,668,'t'],[1045,668,695,'g'],[1057,45,255,'b'],[1057,575,668,'g'],[1069,55,235,'b'],[1069,235,247,'t'],[1081,55,235,'b'],[1093,55,220,'b'],[1105,55,210,'b'],[1117,55,205,'b'],[1129,58,190,'b'],[1141,62,182,'b'],[1153,74,78,'t'],[1153,100,170,'b'],[1165,122,165,'b'],[1177,128,132,'t'],[1177,146,155,'b']
].forEach(c => col(...c));
[240,240,240,258,260,270,295,297,302,306,312,320,328,338,346,354].forEach((a, i) =>
  col(433 + 12 * i, a, [407,405,402,400,397,395,393,392,391,390,388,384,379,374,369,364][i], 'b'));

const prints = $('prints');
prints.setAttribute('class', 'prints');
['8×3','8×9','8×22','7×42','1×12','3×15','7×26','7×15','6×14','5×55','7×18','2×4','1×3','7×1','1×2'].forEach((s, i) =>
  el(prints, 'text', { x: 106, y: 0, 'font-size': 10, transform: `translate(0 ${896 + i * 15}) scale(3 2.24)` }, s));

const list = (node, values, cls) => values.forEach(v => {
  const li = document.createElement('li');
  li.textContent = v;
  const c = cls && cls(v);
  if (c) li.className = c;
  node.appendChild(li);
});
const prices = [];
for (let p = 14600; p >= 10600; p -= 200) prices.push(p === 13200 ? '13214.75' : p + '.00');
list($('prices'), prices, v => v === '13214.75' && 'last');
const fine = [];
for (let p = 13230; p >= 13202; p -= 2) fine.push(p + '.00');
list($('fine-prices'), fine);
list($('dates'), '2-3-16 3-21 3-23 3-25 3-28 3-30 4-3 4-5 4-6 4-8 4-11 4-13 4-18 4-20 4-24 4-26 4-28 5-2 5-3 5-5 5-8 5-10 5-12 5-16 5-18 5-20 5-24 5-26 5-30 6-1 6-2 6-6 6-7 6-9 6-13 6-15 6-17 6-21 6-23 6-26 6-28 6-30 7-4 7-6 7-7 7-11 7-13 7-15 7-19 7-21 7-25 7-27 7-29 8-1 8-3 8-5 8-6'.split(' '), v => v.length === 3 && 's');
```
